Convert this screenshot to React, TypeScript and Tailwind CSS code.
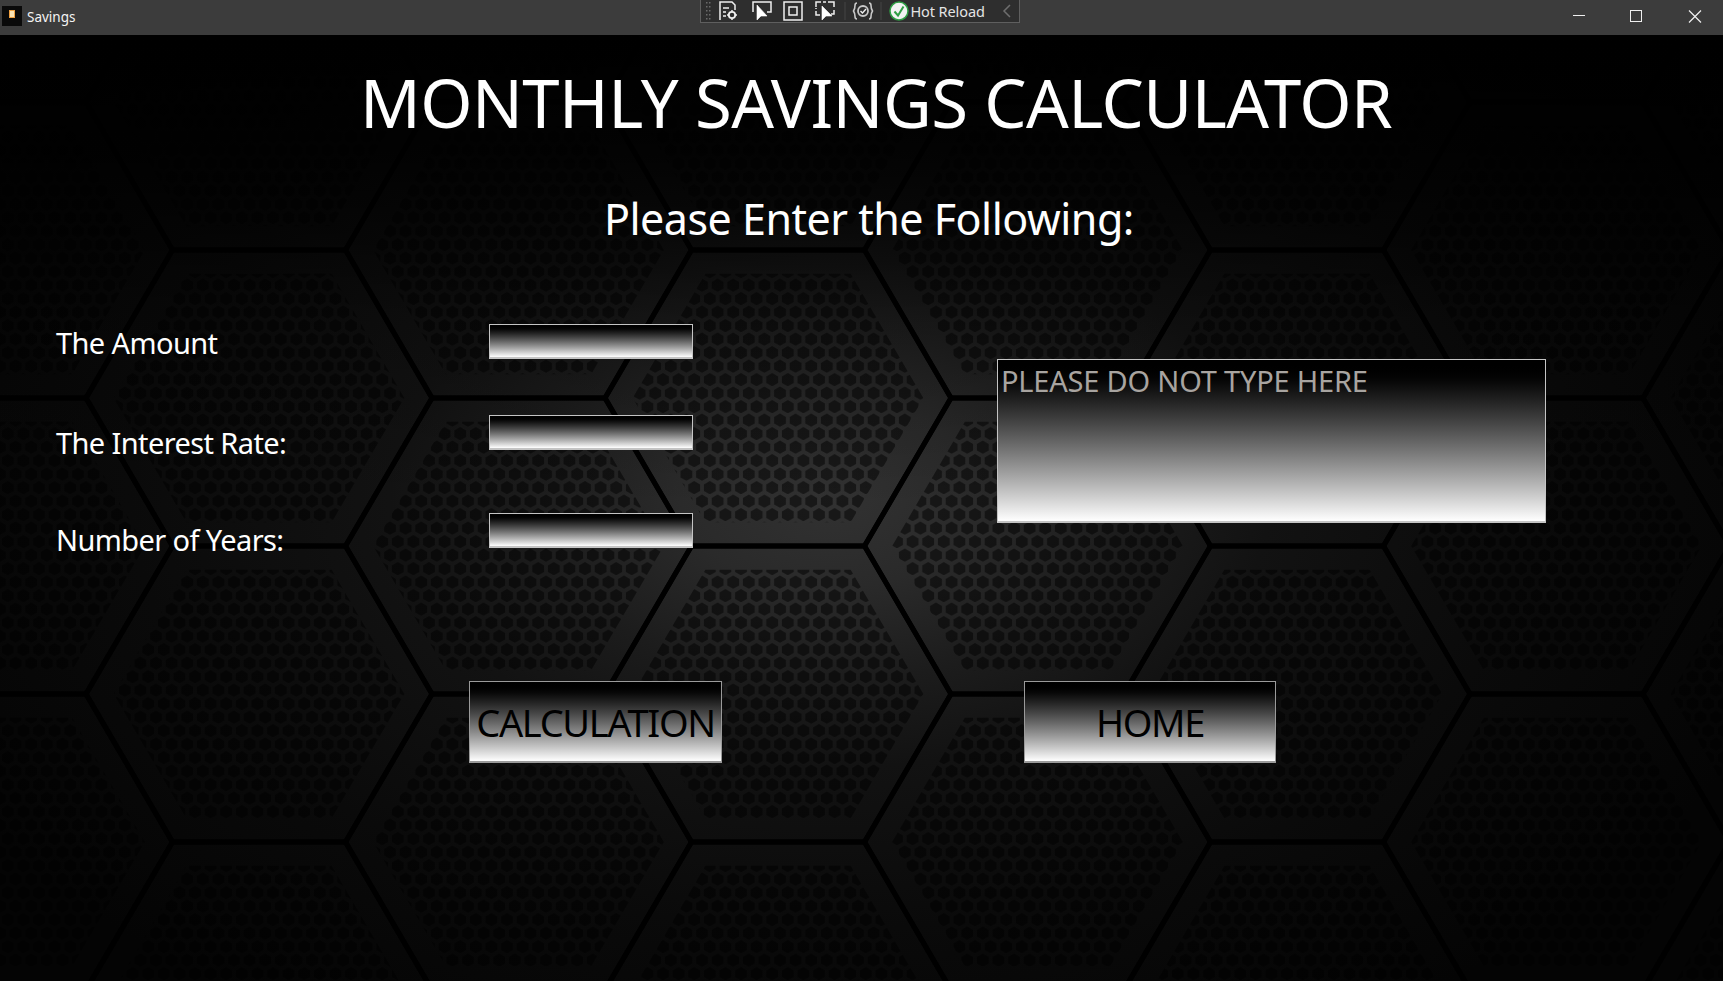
import React from "react";

const R = 173;
const A = 148;
const CX = 778;
const CY = 398 - 35;

function hexPoints(cx: number, cy: number, k: number) {
  const r = R * k;
  const a = A * k;
  return [
    [cx - r, cy],
    [cx - r / 2, cy - a],
    [cx + r / 2, cy - a],
    [cx + r, cy],
    [cx + r / 2, cy + a],
    [cx - r / 2, cy + a],
  ]
    .map((p) => p.join(","))
    .join(" ");
}

const centers: [number, number][] = [];
for (let c = -4; c <= 5; c++) {
  for (let r = -4; r <= 4; r++) {
    centers.push([CX + c * 1.5 * R, CY + r * 2 * A + (Math.abs(c) % 2 ? A : 0)]);
  }
}

function HexBackground() {
  return (
    <svg className="absolute inset-0 h-full w-full" viewBox="0 0 1723 946" preserveAspectRatio="none">
      <defs>
        <radialGradient id="glow" gradientUnits="userSpaceOnUse" cx="830" cy="460" r="1000" gradientTransform="translate(830 460) scale(1 .62) translate(-830 -460)">
          <stop offset="0" stopColor="#323232" />
          <stop offset="0.15" stopColor="#2a2a2a" />
          <stop offset="0.3" stopColor="#1c1c1c" />
          <stop offset="0.44" stopColor="#121212" />
          <stop offset="0.7" stopColor="#0a0a0a" />
          <stop offset="1" stopColor="#040404" />
        </radialGradient>
        <linearGradient id="topfade" x1="0" y1="0" x2="0" y2="1">
          <stop offset="0" stopColor="#000" stopOpacity="1" />
          <stop offset="0.12" stopColor="#000" stopOpacity="0.8" />
          <stop offset="0.3" stopColor="#000" stopOpacity="0.2" />
          <stop offset="0.5" stopColor="#000" stopOpacity="0" />
        </linearGradient>
        <pattern id="holes" width="15.6" height="27" patternUnits="userSpaceOnUse">
          <polygon points="7.8,0.6 13.7,4 13.7,10.4 7.8,13.8 1.9,10.4 1.9,4" fill="#000" fillOpacity="0.5" transform="translate(-7.8 0)" />
          <polygon points="7.8,0.6 13.7,4 13.7,10.4 7.8,13.8 1.9,10.4 1.9,4" fill="#000" fillOpacity="0.5" transform="translate(7.8 0)" />
          <polygon points="7.8,14.1 13.7,17.5 13.7,23.9 7.8,27.3 1.9,23.9 1.9,17.5" fill="#000" fillOpacity="0.5" />
        </pattern>
      </defs>
      <rect width="1723" height="946" fill="url(#glow)" />
      {centers.map(([x, y], i) => (
        <polygon key={i} points={hexPoints(x, y, 0.84)} fill="url(#holes)" />
      ))}
      {centers.map(([x, y], i) => (
        <polygon key={i} points={hexPoints(x, y, 1)} fill="none" stroke="#000" strokeWidth="5" />
      ))}
      <rect width="1723" height="946" fill="url(#topfade)" />
    </svg>
  );
}

function Toolbar() {
  return (
    <div className="flex h-[23px] w-[320px] items-center border-x border-b border-[#5f5f5f] bg-[#2e2e2e] text-[#e8e8e8]">
      <svg width="318" height="23" viewBox="0 0 318 23" className="absolute" fill="none" stroke="#f0f0f0" strokeWidth="1.5">
        <g fill="#6a6a6a" stroke="none">
          <rect x="5" y="2" width="1.5" height="1.5" /><rect x="8" y="2" width="1.5" height="1.5" />
          <rect x="5" y="6" width="1.5" height="1.5" /><rect x="8" y="6" width="1.5" height="1.5" />
          <rect x="5" y="10" width="1.5" height="1.5" /><rect x="8" y="10" width="1.5" height="1.5" />
          <rect x="5" y="14" width="1.5" height="1.5" /><rect x="8" y="14" width="1.5" height="1.5" />
          <rect x="5" y="18" width="1.5" height="1.5" /><rect x="8" y="18" width="1.5" height="1.5" />
        </g>
        <path d="M19 20V2h12l3 3v5" />
        <path d="M22 8h6M22 12h3M22 16h3" />
        <circle cx="31" cy="15" r="3.2" strokeWidth="1.8" />
        <path d="M31 10v1.5M31 18.5V20M26 15h1.5M34.500 15H36" />
        <path d="M52 12V2h18v10h-4" />
        <path d="M56 5l0 15 4-4 6 0z" fill="#fff" stroke="#fff" strokeWidth="0.6" />
        <rect x="83" y="2" width="18" height="18" />
        <rect x="88" y="7" width="8" height="8" />
        <path d="M115 7V2h5M127 2h6v5M115 11v4h4M133 10v4h-3" />
        <path d="M121 6v14l4-4h6z" fill="#fff" stroke="#fff" strokeWidth="0.6" />
        <path d="M122 2h3M115 8v1" />
        <path d="M156 3c-1.500 0-2 1-2 2.500 0 2.500-.5 4-1.500 5.500 1 1.500 1.500 3 1.500 5.500 0 1.500.5 2.500 2 2.500M168 3c1.500 0 2 1 2 2.500 0 2.500.5 4 1.500 5.500-1 1.500-1.500 3-1.500 5.500 0 1.500-.5 2.500-2 2.500" strokeWidth="1.6" stroke="#c8c8c8" />
        <circle cx="162" cy="11" r="5" stroke="#c8c8c8" strokeWidth="1.8" />
        <path d="M159.500 11l2 2L165 9" stroke="#f0f0f0" strokeWidth="1.4" />
        <path d="M180 2v18" stroke="#444" strokeWidth="1" />
        <path d="M144 2v18" stroke="#444" strokeWidth="1" />
        <circle cx="198" cy="11" r="9" fill="#f2f2f2" stroke="#2f9e44" strokeWidth="1.5" />
        <path d="M193.500 11.500l3.500 4 5.500-9" stroke="#2f9e44" strokeWidth="2" />
        <path d="M309 5l-6 6 6 6" stroke="#6e6e6e" strokeWidth="1.5" />
      </svg>
      <span className="ml-[209px] text-[14.500px] leading-none [font-family:'Noto_Sans',sans-serif] tracking-[-0.1px] text-[#e4e4e4]">Hot Reload</span>
    </div>
  );
}

function Field({ label, gap, offset }: { label: string; gap: string; offset: string }) {
  return (
    <div className={`flex items-start ${gap}`}>
      <div className={`${offset} w-[489px] pl-[56px] text-[29px] leading-[40px] tracking-[-0.6px] text-white`}>{label}</div>
      <div className="h-[35px] w-[204px] border border-b-2 border-[#c4c4c4] bg-gradient-to-b from-black to-white" />
    </div>
  );
}

function Btn({ label, w }: { label: string; w: string }) {
  return (
    <div className={`flex h-[82px] ${w} items-center justify-center border border-b-2 border-[#9a9a9a] bg-gradient-to-b from-black to-white text-[38px] leading-none tracking-[-1.35px] text-black`}>
      {label}
    </div>
  );
}

export default function App() {
  return (
    <div className="flex h-[981px] w-[1723px] flex-col overflow-hidden bg-black [font-family:'Noto_Sans',sans-serif]">
      <header className="relative flex h-[35px] shrink-0 items-start bg-[#3c3c3c]">
        <div className="mt-[6px] ml-[2px] flex h-[20px] w-[20px] items-start justify-center bg-[#0a0a0a] pt-[4px]">
          <div className="h-[8px] w-[6px] border border-[#f0a040] bg-[#fbe3b4]" />
        </div>
        <span className="mt-[7px] ml-[5px] text-[13.500px] leading-[20px] text-[#f4f4f4]">Savings</span>
        <div className="relative ml-[625px]"><Toolbar /></div>
        <div className="ml-auto mt-[10px] flex items-start">
          <svg width="150" height="14" viewBox="0 0 150 14" className="mr-[1px]" fill="none" stroke="#f0f0f0" strokeWidth="1">
            <path d="M1 5.500H13" />
            <rect x="58.500" y="0.500" width="11" height="11" />
            <path d="M117 0.500L129 12.500M129 0.500L117 12.500" strokeWidth="1.2" />
          </svg>
        </div>
      </header>
      <main className="relative flex-1">
        <HexBackground />
        <div className="relative flex flex-col">
          <h1 className="mt-[34px] ml-[360px] text-[67px] leading-[66px] font-normal tracking-[-0.55px] whitespace-nowrap text-white">MONTHLY SAVINGS CALCULATOR</h1>
          <h2 className="mt-[55px] ml-[604px] text-[43px] leading-[58px] font-normal tracking-[-0.5px] whitespace-nowrap text-white">Please Enter the Following:</h2>
          <div className="mt-[76px] flex items-start">
            <div className="flex w-[693px] flex-col">
              <Field label="The Amount" gap="" offset="-mt-[1px]" />
              <Field label="The Interest Rate:" gap="mt-[52px]" offset="mt-[8px]" />
              <Field label="Number of Years:" gap="mt-[50px]" offset="mt-[7px]" />
            </div>
            <div className="mt-[35px] ml-[304px] h-[164px] w-[549px] border border-b-2 border-[#c4c4c4] bg-gradient-to-b from-black to-white px-[3px] pt-[1px] text-[29px] leading-[40px] tracking-[-0.2px] text-[#a8a4a0]">
              PLEASE DO NOT TYPE HERE
            </div>
          </div>
          <div className="mt-[121px] flex gap-[302px] pl-[469px]">
            <Btn label="CALCULATION" w="w-[253px]" />
            <Btn label="HOME" w="w-[252px]" />
          </div>
        </div>
      </main>
    </div>
  );
}
